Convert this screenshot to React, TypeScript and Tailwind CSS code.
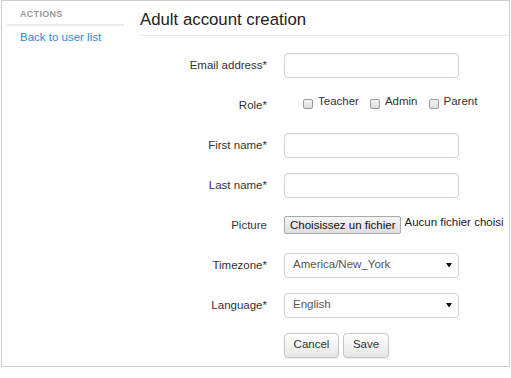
import React from "react";

const font = { fontFamily: '"Liberation Sans", Arial, sans-serif' };

function Row({ label, children }: { label: string; children: React.ReactNode }) {
  return (
    <div className="flex h-[40px] items-center">
      <div className="w-[128px] pr-[1px] pt-[1px] text-right text-[11.5px] text-[#333]">{label}</div>
      <div className="ml-[16px] flex items-center">{children}</div>
    </div>
  );
}

function TextInput() {
  return (
    <input
      type="text"
      className="h-[25px] w-[175px] rounded-[4px] border border-[#d4d4d4] bg-white shadow-[inset_0_1px_1px_rgba(0,0,0,0.06)] outline-none"
    />
  );
}

function Select({ value }: { value: string }) {
  return (
    <div className="flex h-[25px] w-[175px] items-center justify-between rounded-[4px] border border-[#d4d4d4] bg-white pl-[8px] pr-[4px] text-[11.5px] text-[#555]">
      <span>{value}</span>
      <svg width="8" height="6" viewBox="0 0 8 6" className="mr-[1px]">
        <path d="M1 1h6L4 5.5z" fill="#111" />
      </svg>
    </div>
  );
}

function Check({ label }: { label: string }) {
  return (
    <label className="flex items-start">
      <span className="mt-[5px] h-[10px] w-[10px] rounded-[2px] border border-[#9a9a9a] bg-gradient-to-b from-[#f4f4f4] to-[#dcdcdc]" />
      <span className="ml-[5px] text-[11.5px] leading-[14px] text-[#333]">{label}</span>
    </label>
  );
}

function Btn({ children, w }: { children: React.ReactNode; w: string }) {
  return (
    <button
      className={`h-[25px] ${w} rounded-[4px] border border-[#c6c6c6] bg-gradient-to-b from-white to-[#e6e6e6] text-[11.5px] text-[#333] shadow-[0_1px_1px_rgba(0,0,0,0.08)]`}
    >
      {children}
    </button>
  );
}

export default function App() {
  return (
    <div className="h-[378px] w-[511px] bg-white" style={font}>
      <div className="ml-px flex h-[367px] w-[509px] border border-[#cfcfcf]">
        {/* sidebar */}
        <div className="w-[122px] pl-[5px]">
          <div className="border-b-2 border-[#ececec] pl-[13px] pt-[7px] pb-[2px] text-[9px] font-bold uppercase tracking-[0.3px] text-[#999]">
            Actions
          </div>
          <a className="mt-[3px] block pl-[13px] text-[11.5px] text-[#2a8ad4]">Back to user list</a>
        </div>

        {/* main */}
        <div className="ml-[16px] flex-1">
          <h1 className="flex h-[35px] items-center border-b border-[#e6e6e6] pt-[3px] text-[16.8px] text-[#222]">
            Adult account creation
          </h1>
          <div className="pt-[9px]">
            <Row label="Email address*">
              <TextInput />
            </Row>
            <Row label="Role*">
              <div className="ml-[19px] -mt-[7px] flex gap-[11px]">
                <Check label="Teacher" />
                <Check label="Admin" />
                <Check label="Parent" />
              </div>
            </Row>
            <Row label="First name*">
              <TextInput />
            </Row>
            <Row label="Last name*">
              <TextInput />
            </Row>
            <Row label="Picture">
              <div className="flex items-start whitespace-nowrap">
                <button className="h-[18px] rounded-[2px] border border-[#a9a9a9] bg-gradient-to-b from-[#f6f6f6] to-[#dedede] px-[5px] text-[11.5px] leading-[16px] text-[#111]">
                  Choisissez un fichier
                </button>
                <span className="ml-[3px] -mt-[2px] text-[11.5px] text-[#222]">Aucun fichier choisi</span>
              </div>
            </Row>
            <Row label="Timezone*">
              <Select value="America/New_York" />
            </Row>
            <Row label="Language*">
              <Select value="English" />
            </Row>
            <Row label="">
              <div className="flex gap-[4px]">
                <Btn w="w-[55px]">Cancel</Btn>
                <Btn w="w-[46px]">Save</Btn>
              </div>
            </Row>
          </div>
        </div>
      </div>
    </div>
  );
}
